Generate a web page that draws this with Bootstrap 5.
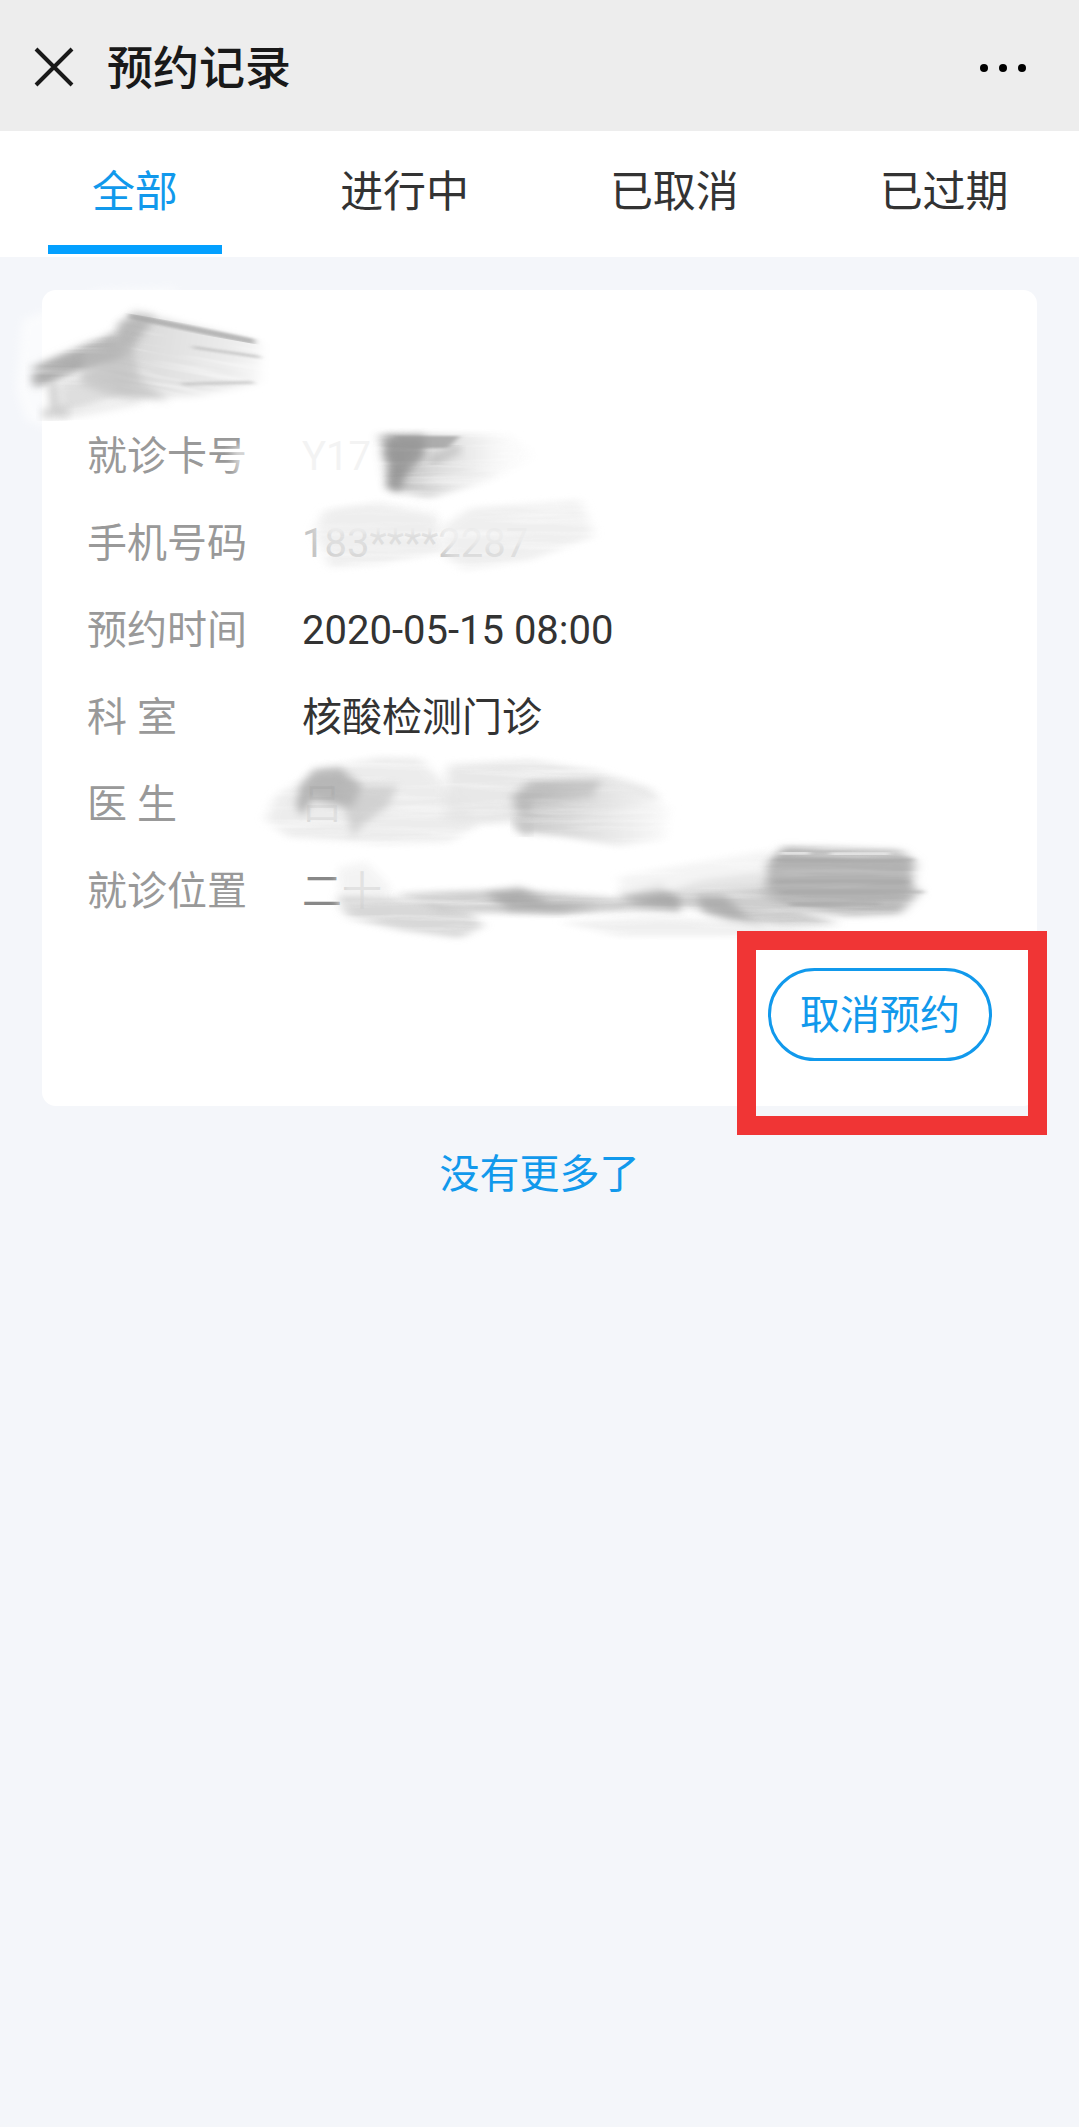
<!DOCTYPE html>
<html lang="zh-CN">
<head>
<meta charset="utf-8">
<meta name="viewport" content="width=device-width, initial-scale=1">
<title>预约记录</title>
<link href="https://cdn.jsdelivr.net/npm/bootstrap@5.3.0/dist/css/bootstrap.min.css" rel="stylesheet">
<style>
  :root { --accent: #1199ec; }
  body { background: #f4f6fa; color: #333; font-family: Roboto, "Noto Sans CJK SC", sans-serif; font-size: 40px; }
  .topbar { background: #ededed; height: 131px; padding: 4px 52px 0 33px; }
  .topbar h1 { font-size: 46px; line-height: 60px; font-weight: 500; color: #191919; }
  .icon-btn { line-height: 0; color: #191919; }
  .tabs .nav-link { color: #333; font-size: 43px; line-height: 60px; padding: 31px 0 35px; border-radius: 0; position: relative; }
  .tabs .nav-link.active { color: var(--accent); }
  .tabs .nav-link.active::after { content: ""; position: absolute; left: 50%; bottom: 3px; width: 174px; height: 9px; margin-left: -87px; background: #03a0ff; }
  .record { margin: 33px 42px 0; padding: 123px 45px 45px; border: 0; border-radius: 14px; }
  .record dt, .record dd { line-height: 87px; margin: 0; }
  .record dt { width: 215px; font-weight: 400; color: #999; }
  .record dd { white-space: nowrap; }
  .faint-1 { color: #f3f3f3; }
  .faint-2 { color: #c4c4c4; }
  .faint-3 { color: #888; }
  .scribble { left: 0; top: 0; overflow: visible; pointer-events: none; }
  .actions { margin-top: 33px; }
  .btn-cancel { --bs-btn-color: var(--accent); --bs-btn-border-color: var(--accent); --bs-btn-hover-color: #fff; --bs-btn-hover-bg: var(--accent); border-width: 3px; font-size: 40px; line-height: 60px; padding: 15px 29px 12px; white-space: nowrap; }
  .callout-box { inset: -37px -55px -74px -31px; border: 19px solid #f03535; pointer-events: none; }
  .list-end { margin-top: 39px; line-height: 60px; color: var(--accent); }
</style>
</head>
<body>
<header class="topbar d-flex align-items-center">
  <button type="button" class="btn icon-btn border-0 p-0" aria-label="关闭">
    <svg width="42" height="42" viewBox="0 0 42 42" fill="none" stroke="currentColor" stroke-width="4"><path d="M3 2 39 38M39 2 3 38"/></svg>
  </button>
  <h1 class="mb-0 ms-3 ps-3 flex-grow-1">预约记录</h1>
  <button type="button" class="btn icon-btn border-0 p-0" aria-label="更多">
    <svg width="48" height="10" viewBox="0 0 48 10" fill="#000"><circle cx="5" cy="5" r="4"/><circle cx="24" cy="5" r="4"/><circle cx="43" cy="5" r="4"/></svg>
  </button>
</header>

<nav class="tabs nav nav-justified bg-white" aria-label="预约状态">
  <a class="nav-link active" aria-current="page" href="#all">全部</a>
  <a class="nav-link" href="#ongoing">进行中</a>
  <a class="nav-link" href="#cancelled">已取消</a>
  <a class="nav-link" href="#expired">已过期</a>
</nav>

<main>
  <article class="card record">
    <dl class="mb-0">
      <div class="d-flex"><dt>就诊卡号</dt><dd class="faint-1">Y17</dd></div>
      <div class="d-flex"><dt>手机号码</dt><dd class="faint-2">183****2287</dd></div>
      <div class="d-flex"><dt>预约时间</dt><dd>2020-05-15 08:00</dd></div>
      <div class="d-flex"><dt>科 室</dt><dd>核酸检测门诊</dd></div>
      <div class="d-flex"><dt>医 生</dt><dd class="faint-2">吕</dd></div>
      <div class="d-flex"><dt>就诊位置</dt><dd class="faint-3">二十</dd></div>
    </dl>

    <!-- brush strokes that hide the private fields -->
    <svg class="scribble position-absolute" width="1" height="1" aria-hidden="true">
      <defs>
        <filter id="brush" x="-10%" y="-20%" width="120%" height="140%">
          <feGaussianBlur in="SourceGraphic" stdDeviation="6 3" result="soft"/>
          <feTurbulence type="fractalNoise" baseFrequency="0.008 0.13" numOctaves="3" seed="4" result="grain"/>
          <feColorMatrix in="grain" type="matrix" values="0 0 0 0 0  0 0 0 0 0  0 0 0 0 0  1.1 0 0 0 0.4" result="streaks"/>
          <feComposite in="soft" in2="streaks" operator="in"/>
        </filter>
        <filter id="soft" x="-20%" y="-20%" width="140%" height="140%"><feGaussianBlur stdDeviation="4"/></filter>
        <filter id="line" x="-10%" y="-40%" width="120%" height="180%"><feGaussianBlur stdDeviation="3 1"/></filter>
        <linearGradient id="fadeRight"><stop offset="0" stop-color="#ccc"/><stop offset=".35" stop-color="#dedede"/><stop offset=".8" stop-color="#ececec"/><stop offset="1" stop-color="#f8f8f8"/></linearGradient>
        <linearGradient id="fadeOut"><stop offset="0" stop-color="#aaa"/><stop offset=".35" stop-color="#d8d8d8"/><stop offset=".75" stop-color="#f8f8f8"/><stop offset="1" stop-color="#fff"/></linearGradient>
        <linearGradient id="doctorFade"><stop offset="0" stop-color="#bbb"/><stop offset=".5" stop-color="#ddd"/><stop offset="1" stop-color="#fafafa"/></linearGradient>
      </defs>
      <g transform="translate(-42 -290)">
        <!-- name -->
        <path d="M22 320 100 290 180 288 150 310 60 330 55 430 26 420 16 390Z" fill="#fff" opacity=".6" filter="url(#soft)"/>
        <g transform="rotate(10 150 360)">
          <path d="M116 326 150 316 256 322 262 364 200 388 130 402 96 396 106 350Z" fill="url(#fadeRight)" filter="url(#brush)"/>
          <path d="M122 320 250 324" stroke="#aaa" stroke-width="6" opacity=".8" filter="url(#line)"/>
          <path d="M190 340 258 338M186 378 256 364" stroke="#bbb" stroke-width="3" opacity=".7" filter="url(#line)"/>
        </g>
        <path d="M34 366 80 346 118 332 122 356 90 368 36 386Z" fill="#b4b4b4" filter="url(#brush)"/>
        <path d="M58 382 110 366 120 396 60 414Z" fill="#dedede" filter="url(#brush)"/>
        <path d="M118 326 134 312 156 316 146 330 128 352 60 376 34 388 32 376 88 352 118 344Z" fill="#a8a8a8" opacity=".65" filter="url(#soft)"/>
        <path d="M84 350 130 340 140 380 170 400 112 396 80 384Z" fill="#bdbdbd" opacity=".6" filter="url(#soft)"/>
        <path d="M52 382 55 412M42 414 68 412" fill="none" stroke="#aaa" stroke-width="9" opacity=".55" filter="url(#soft)"/>
        <path d="M60 416Q100 408 140 400" fill="none" stroke="#ccc" stroke-width="5" opacity=".6" filter="url(#soft)"/>
        <!-- card number -->
        <path d="M230 446H252V480H238Z" fill="#fff" opacity=".6" filter="url(#soft)"/>
        <path d="M380 434H510L540 456 490 480 430 498 390 490Z" fill="url(#fadeOut)" opacity=".9" filter="url(#brush)"/>
        <path d="M388 438 424 436 424 456 408 472 398 492 386 486 390 466 384 450Z" fill="#8c8c8c" opacity=".75" filter="url(#soft)"/>
        <path d="M394 436H460L448 448 400 448Z" fill="#999" opacity=".7" filter="url(#line)"/>
        <path d="M430 462 460 448" stroke="#aaa" stroke-width="8" opacity=".6" filter="url(#soft)"/>
        <!-- phone number -->
        <path d="M318 514Q360 498 440 508V534H326Z" fill="#fbfbfb" opacity=".9" filter="url(#soft)"/>
        <path d="M440 508H548V546H440Z" fill="#fff" opacity=".8" filter="url(#soft)"/>
        <path d="M314 530 326 510 380 502 436 516 444 552 380 564 330 568Z" fill="#e9e9e9" opacity=".7" filter="url(#brush)"/>
        <path d="M444 526 470 508 580 500 594 536 530 560 464 570 446 558Z" fill="#e9e9e9" opacity=".7" filter="url(#brush)"/>
        <!-- doctor -->
        <path d="M276 796 320 768 380 757 420 758 450 790 480 824 450 842 380 844 290 838 266 820Z" fill="#e8e8e8" opacity=".8" filter="url(#brush)"/>
        <path d="M448 764 530 760 596 770 650 788 660 800 600 814 490 824 444 820Z" fill="#e4e4e4" opacity=".85" filter="url(#brush)"/>
        <path d="M300 786 314 770 340 768 362 786 352 808 312 800 302 816 296 806Z" fill="#999" opacity=".65" filter="url(#soft)"/>
        <path d="M340 784 398 786 388 806 364 824 352 836 346 812Z" fill="#bbb" opacity=".55" filter="url(#soft)"/>
        <path d="M512 796 530 780 604 780 670 806 664 840 620 846 560 836 520 832Z" fill="url(#doctorFade)" opacity=".85" filter="url(#brush)"/>
        <path d="M514 804Q520 784 556 782L602 780 592 796 534 802 526 814Z" fill="#aaa" opacity=".5" filter="url(#soft)"/>
        <path d="M514 820 530 834" stroke="#bbb" stroke-width="9" opacity=".6" filter="url(#soft)"/>
        <!-- location -->
        <path d="M338 868 366 862 390 886 390 914 340 908Z" fill="#f2f2f2" opacity=".85" filter="url(#soft)"/>
        <path d="M338 896 400 898 470 912 484 926 460 938 400 930 348 918Z" fill="#d4d4d4" opacity=".9" filter="url(#brush)"/>
        <path d="M396 894Q460 890 520 890L640 900 700 880 760 872 790 908 840 924 780 928 690 908 560 914 440 912Z" fill="#c6c6c6" opacity=".85" filter="url(#brush)"/>
        <path d="M484 894 520 888 550 902 600 906 560 912 510 910ZM616 896 660 884 680 898 680 912 640 906Z" fill="#999" opacity=".65" filter="url(#soft)"/>
        <path d="M696 896 724 896 750 918 770 928 730 922 704 912Z" fill="#999" opacity=".6" filter="url(#soft)"/>
        <path d="M560 922 660 916 740 922 830 930 760 936 620 936Z" fill="#ececec" opacity=".8" filter="url(#brush)"/>
        <path d="M620 876 700 862 770 850V886L700 890 620 892Z" fill="#f0f0f0" opacity=".7" filter="url(#brush)"/>
        <path d="M768 862 784 846 900 850 916 862 912 884 920 892 900 914 850 916 790 910 764 896Z" fill="#bdbdbd" filter="url(#brush)"/>
        <path d="M770 864 784 852 908 858 910 894 896 904 830 908 782 900 768 890Z" fill="#ababab" opacity=".6" filter="url(#soft)"/>
        <path d="M774 860H914M776 882H908M780 892H924M790 904H880" fill="none" stroke="#a5a5a5" stroke-width="4" opacity=".5" filter="url(#line)"/>
        <path d="M780 853H810M830 854H890" stroke="#eee" stroke-width="4" opacity=".8" filter="url(#line)"/>
      </g>
    </svg>

    <div class="actions d-flex justify-content-end">
      <div class="position-relative">
        <button type="button" class="btn btn-cancel rounded-pill d-block">取消预约</button>
        <div class="callout-box position-absolute"></div>
      </div>
    </div>
  </article>
  <p class="list-end text-center mb-0">没有更多了</p>
</main>
<script src="https://cdn.jsdelivr.net/npm/bootstrap@5.3.0/dist/js/bootstrap.bundle.min.js"></script>
</body>
</html>
